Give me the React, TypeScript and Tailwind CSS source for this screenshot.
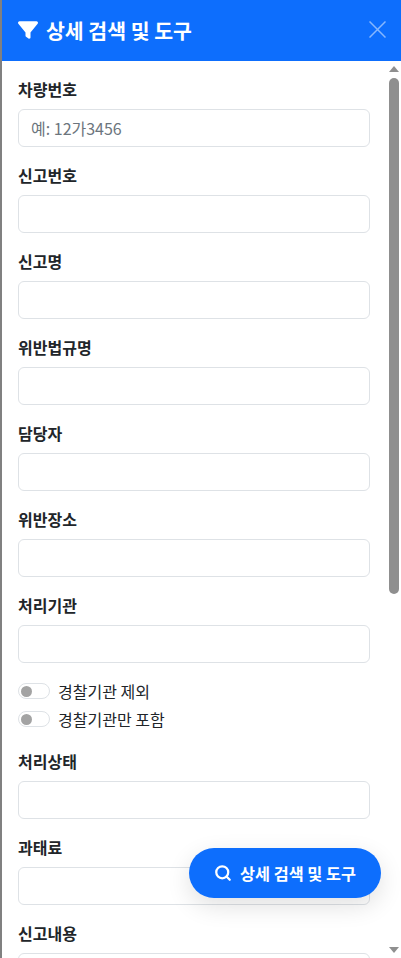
import React from "react";
import { Search } from "lucide-react";

const fontStack = "font-['Noto_Sans_CJK_KR','Noto_Sans',sans-serif]";

const Field = ({ label, placeholder }: { label: string; placeholder?: string }) => (
  <div className="mb-4">
    <label className="mb-2 block text-base leading-6 font-bold text-[#212529]">{label}</label>
    <input
      type="text"
      placeholder={placeholder}
      className="block h-[38px] w-full rounded-md border border-[#dee2e6] bg-white px-3 text-base text-[#212529] placeholder:text-[#6c757d]"
    />
  </div>
);

const Toggle = ({ label }: { label: string }) => (
  <div className="flex h-7 items-center gap-2">
    <span className="flex h-4 w-8 items-center rounded-full border border-[#dee2e6] bg-white px-[2px]">
      <span className="h-[11px] w-[11px] rounded-full bg-[#a3a3a3]" />
    </span>
    <span className="text-base leading-6 text-[#212529]">{label}</span>
  </div>
);

export default function App() {
  return (
    <div className={`relative flex h-[958px] w-[401px] overflow-hidden bg-[#808080] pl-[2px] ${fontStack}`}>
      <div className="flex min-w-0 flex-1 flex-col bg-white">
        <header className="flex h-[61px] shrink-0 items-center justify-between bg-[#0d6efd] pr-[15px] pb-[2px] pl-4 text-white">
          <h5 className="flex items-center gap-2 text-[20.5px] leading-6 font-bold">
            <svg viewBox="0 0 512 512" className="h-5 w-5" fill="currentColor">
              <path d="M3.9 54.9C10.5 40.9 24.5 32 40 32h432c15.5 0 29.5 8.9 36.1 22.9s4.6 30.5-5.2 42.5L320 320.9V448c0 12.1-6.8 23.2-17.7 28.6s-23.8 4.3-33.5-3l-64-48c-8.1-6-12.8-15.5-12.8-25.6v-79.1L9 97.3C-.7 85.4-2.8 68.8 3.9 54.9z" />
            </svg>
            상세 검색 및 도구
          </h5>
          <svg viewBox="0 0 17 17" className="h-[17px] w-[17px] opacity-50" fill="none" stroke="currentColor" strokeWidth={1.5}>
            <path d="M0.5 0.5 16.5 16.5M16.5 0.5 0.5 16.5" />
          </svg>
        </header>
        <div className="flex min-h-0 flex-1">
          <div className="min-w-0 flex-1 overflow-hidden px-4 pt-4">
            <Field label="차량번호" placeholder="예: 12가3456" />
            <Field label="신고번호" />
            <Field label="신고명" />
            <Field label="위반법규명" />
            <Field label="담당자" />
            <Field label="위반장소" />
            <Field label="처리기관" />
            <div className="mb-4 -mt-0.5">
              <Toggle label="경찰기관 제외" />
              <Toggle label="경찰기관만 포함" />
            </div>
            <Field label="처리상태" />
            <Field label="과태료" />
            <Field label="신고내용" />
          </div>
          <div className="flex w-[15px] shrink-0 flex-col items-center bg-white">
            <svg viewBox="0 0 10 6" className="mt-[5px] h-[6px] w-[10px]" fill="#8f8f8f">
              <path d="M5 0 10 6H0z" />
            </svg>
            <div className="mt-[6px] h-[516px] w-[10px] rounded-full bg-[#8f8f8f]" />
            <svg viewBox="0 0 10 6" className="mt-auto mb-[5px] h-[6px] w-[10px]" fill="#8f8f8f">
              <path d="M0 0H10L5 6z" />
            </svg>
          </div>
        </div>
      </div>
      <button className="absolute top-[848px] left-[189px] flex h-[50px] w-[192px] items-center justify-center gap-2 rounded-full bg-[#0d6efd] text-[16.3px] font-bold text-white shadow-[0_8px_24px_rgba(0,0,0,0.12)]">
        <Search className="h-[18px] w-[18px]" strokeWidth={3} />
        상세 검색 및 도구
      </button>
    </div>
  );
}
